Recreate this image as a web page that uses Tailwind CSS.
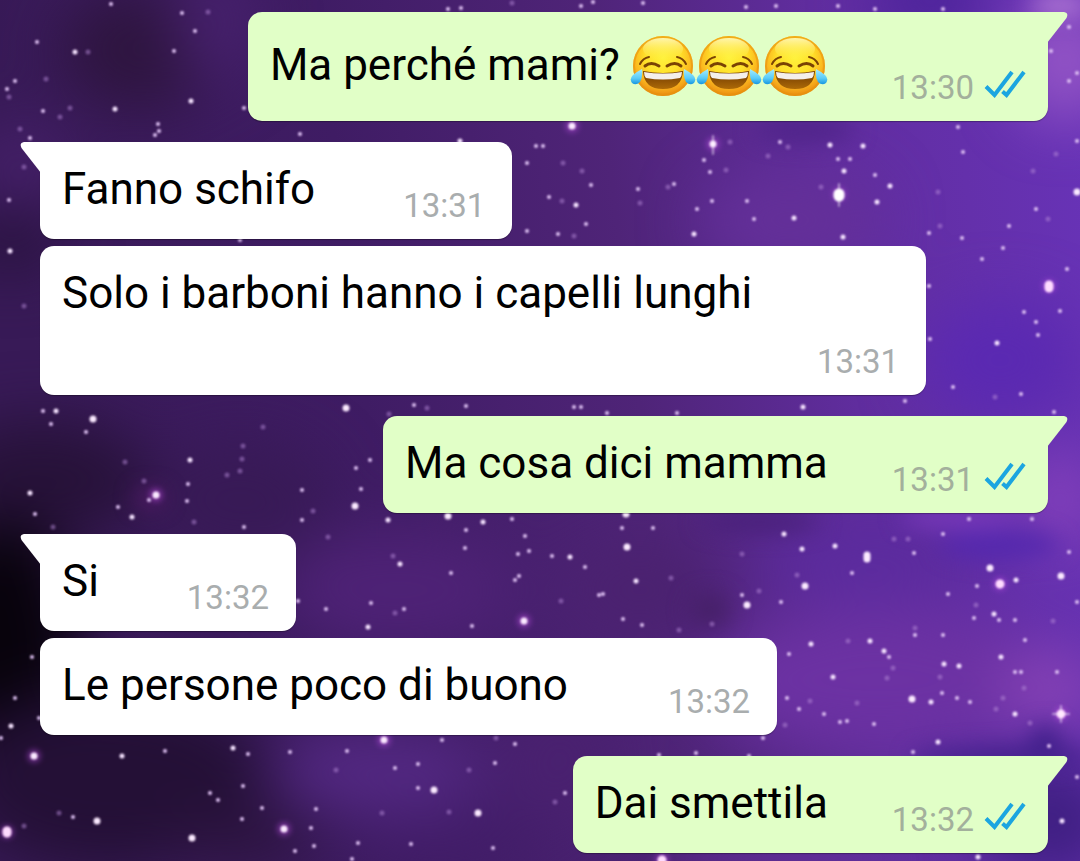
<!DOCTYPE html>
<html lang="it">
<head>
    <meta charset="UTF-8">
    <meta name="viewport" content="width=device-width, initial-scale=1.0">
    <title>Chat</title>

    <!-- Tailwind CSS -->
    <script src="https://cdn.jsdelivr.net/npm/@tailwindcss/browser@4"></script>
</head>
<body class="bg-[#3a1a5e] font-['Roboto',sans-serif] text-black">
    <main class="relative isolate min-h-screen overflow-hidden">

        <!-- Wallpaper: nebula and stars -->
        <svg class="absolute inset-0 -z-10 w-full h-full" viewBox="0 0 1080 861" preserveAspectRatio="xMidYMid slice" aria-hidden="true">
            <defs>
                <linearGradient id="sky" x1="0" y1="0.1" x2="1" y2="0">
                    <stop offset="0" stop-color="#381a57"/>
                    <stop offset="0.3" stop-color="#3f1c64"/>
                    <stop offset="0.55" stop-color="#4f2478"/>
                    <stop offset="0.75" stop-color="#602d9e"/>
                    <stop offset="1" stop-color="#6833b8"/>
                </linearGradient>
                <filter id="cloud" x="-60%" y="-60%" width="220%" height="220%" color-interpolation-filters="sRGB">
                    <feGaussianBlur stdDeviation="30"/>
                </filter>
                <filter id="wisp" x="-60%" y="-60%" width="220%" height="220%" color-interpolation-filters="sRGB">
                    <feGaussianBlur stdDeviation="11"/>
                </filter>
                <filter id="glow" x="-10%" y="-10%" width="120%" height="120%" color-interpolation-filters="sRGB">
                    <feGaussianBlur stdDeviation="3"/>
                </filter>
                <filter id="soft" x="-5%" y="-5%" width="110%" height="110%" color-interpolation-filters="sRGB">
                    <feGaussianBlur stdDeviation="0.8"/>
                </filter>
            </defs>
            <rect width="1080" height="861" fill="url(#sky)"/>

            <g filter="url(#cloud)">
                <ellipse cx="140" cy="50" rx="80" ry="60" fill="#2e153f"/>
                <ellipse cx="20" cy="165" rx="50" ry="40" fill="#452069"/>
                <ellipse cx="215" cy="20" rx="40" ry="60" fill="#47216e"/>
                <ellipse cx="10" cy="240" rx="50" ry="30" fill="#28123d"/>
                <ellipse cx="40" cy="480" rx="110" ry="60" fill="#271239"/>
                <ellipse cx="0" cy="640" rx="80" ry="120" fill="#08030c"/>
                <ellipse cx="110" cy="780" rx="160" ry="90" fill="#241036"/>
                <ellipse cx="240" cy="840" rx="80" ry="30" fill="#2c143f"/>
                <ellipse cx="240" cy="500" rx="90" ry="60" fill="#381a56"/>
                <ellipse cx="400" cy="590" rx="120" ry="60" fill="#4e2276"/>
                <ellipse cx="380" cy="770" rx="110" ry="40" fill="#542984"/>
                <ellipse cx="450" cy="835" rx="90" ry="30" fill="#421d69"/>
                <ellipse cx="640" cy="590" rx="80" ry="50" fill="#4b2270"/>
                <ellipse cx="560" cy="760" rx="50" ry="60" fill="#4a2170"/>
                <ellipse cx="790" cy="220" rx="90" ry="50" fill="#643099"/>
                <ellipse cx="870" cy="560" rx="110" ry="40" fill="#5b2b9e"/>
                <ellipse cx="880" cy="680" rx="170" ry="70" fill="#6c32a3"/>
                <ellipse cx="1000" cy="360" rx="80" ry="60" fill="#5a29b2"/>
                <ellipse cx="1060" cy="500" rx="40" ry="50" fill="#8441bb"/>
                <ellipse cx="1065" cy="60" rx="50" ry="60" fill="#9556c6"/>
                <ellipse cx="930" cy="0" rx="60" ry="30" fill="#462096"/>
                <ellipse cx="1050" cy="690" rx="50" ry="40" fill="#8843b6"/>
                <ellipse cx="1050" cy="820" rx="70" ry="60" fill="#3f1f82"/>
            </g>
            <g filter="url(#wisp)">
                <ellipse cx="805" cy="130" rx="50" ry="12" fill="#4f2489"/>
                <ellipse cx="710" cy="610" rx="20" ry="16" fill="#462068"/>
                <ellipse cx="760" cy="522" rx="60" ry="10" fill="#482079"/>
                <ellipse cx="1000" cy="545" rx="60" ry="14" fill="#5428ae"/>
                <ellipse cx="960" cy="518" rx="60" ry="10" fill="#7a3abb"/>
                <ellipse cx="1000" cy="758" rx="90" ry="10" fill="#42208c"/>
                <ellipse cx="1045" cy="740" rx="16" ry="14" fill="#42208c"/>
                <ellipse cx="1060" cy="5" rx="30" ry="10" fill="#b27ad6"/>
                <ellipse cx="150" cy="498" rx="14" ry="8" fill="#5c1c70"/>
                <ellipse cx="790" cy="858" rx="120" ry="5" fill="#6a34a8"/>
            </g>

            <!-- Halos of the brightest stars -->
            <path filter="url(#glow)" fill="none" stroke="#c04fe6" stroke-width="12" stroke-linecap="round" opacity="0.6" d="M7 832h0M34 756h0M284 829h0M156 495h0M384 740h0M524 621h0M1000 584h0M662 860h0M1061 714h0M839 194h0M1049 286h0M572 126h0M713 144h0"/>

            <g filter="url(#soft)" fill="none" stroke-linecap="round">
                <!-- Faint -->
                <path stroke="#b58ad8" stroke-width="5" opacity="0.5" d="M208 12h0M88 52h0M9 97h0M46 79h0M70 108h0M60 117h0M20 129h0M512 3h0M24 306h0M24 167h0M427 408h0M263 427h0M389 414h0M726 170h0M730 142h0M788 147h0M768 156h0M821 187h0M938 192h0M668 187h0M562 201h0M582 171h0M563 163h0M640 203h0M574 236h0M940 226h0M1048 219h0M1056 154h0M1033 171h0M995 397h0M243 446h0M227 475h0M53 527h0M194 522h0M313 511h0M328 537h0M393 556h0M395 613h0M496 738h0M336 770h0M469 770h0M382 813h0M449 812h0M59 813h0M24 826h0M908 539h0M894 539h0M797 575h0M742 554h0M759 591h0M671 578h0M561 601h0M712 624h0M679 630h0M1053 621h0M976 605h0M848 641h0M915 628h0M940 677h0M1024 688h0M887 678h0M893 668h0M785 725h0M810 701h0M857 703h0M996 709h0M1003 698h0M1030 723h0M555 802h0M125 462h0M144 481h0M242 459h0M240 471h0"/>
                <!-- Small -->
                <path stroke="#e2c4f6" stroke-width="4" d="M111 4h0M182 13h0M195 31h0M37 42h0M174 51h0M15 81h0M7 89h0M43 111h0M244 108h0M158 124h0M159 131h0M155 135h0M30 138h0M300 134h0M448 9h0M461 8h0M527 163h0M536 146h0M527 231h0M9 200h0M240 240h0M43 411h0M51 424h0M414 405h0M466 406h0M543 146h0M581 6h0M593 2h0M643 3h0M746 7h0M776 6h0M838 6h0M875 9h0M943 9h0M704 160h0M710 172h0M780 142h0M838 159h0M850 159h0M958 127h0M963 152h0M875 175h0M638 189h0M674 184h0M591 185h0M549 197h0M712 201h0M747 201h0M697 209h0M754 219h0M586 224h0M558 234h0M929 233h0M962 238h0M1009 226h0M1036 209h0M1003 248h0M982 259h0M1067 269h0M1024 312h0M1060 311h0M1036 322h0M1038 335h0M929 286h0M930 339h0M953 387h0M1021 394h0M905 401h0M1054 412h0M581 407h0M574 407h0M607 413h0M677 413h0M1069 27h0M1051 51h0M1069 81h0M1077 73h0M1077 141h0"/>
                <path stroke="#e2c4f6" stroke-width="4" d="M86 432h0M149 500h0M188 484h0M187 501h0M118 507h0M35 514h0M244 527h0M302 490h0M302 520h0M356 468h0M361 489h0M370 460h0M466 530h0M512 519h0M525 536h0M465 548h0M518 554h0M529 551h0M451 573h0M519 576h0M515 580h0M298 601h0M326 609h0M371 603h0M404 609h0M472 626h0M32 657h0M15 698h0M39 718h0M1 738h0M248 754h0M290 752h0M347 751h0M442 740h0M515 744h0M418 764h0M395 768h0M495 763h0M418 788h0M243 786h0M210 793h0M218 800h0M262 808h0M316 809h0M242 819h0M73 817h0M311 828h0M314 846h0M295 851h0M358 843h0M352 859h0M411 844h0M493 848h0M165 751h0M1032 519h0M969 519h0M914 553h0M943 534h0M852 573h0M742 595h0M781 602h0M622 528h0M653 528h0M552 556h0M585 567h0M599 595h0M603 594h0M623 619h0M642 625h0M1069 552h0M1077 602h0M977 586h0M948 594h0M974 618h0M999 620h0M1015 620h0M789 654h0M889 657h0M915 635h0M943 635h0M1025 640h0M942 693h0M1015 672h0M1021 672h0M1057 672h0M787 698h0M799 709h0M957 698h0M970 702h0M824 714h0M840 722h0M847 721h0M874 724h0M1049 746h0M913 752h0M763 738h0M749 756h0M696 753h0M659 755h0M565 793h0M1077 777h0"/>
                <!-- Bright -->
                <path stroke="#f6e4ff" stroke-width="5" d="M75 52h0M191 101h0M115 109h0M460 141h0M10 251h0M56 411h0M830 145h0M863 146h0M844 171h0M890 186h0M877 202h0M576 205h0M794 218h0M694 234h0M843 237h0M997 343h0M803 407h0M190 460h0M132 517h0M30 493h0M388 520h0M483 522h0M400 564h0M368 627h0M11 726h0M122 756h0M233 748h0M784 534h0M802 549h0M835 546h0M570 557h0M636 581h0M1016 580h0M994 614h0M811 644h0M870 641h0M884 651h0M1001 657h0M944 664h0M959 666h0M833 677h0M931 702h0M1015 714h0M938 742h0M1062 821h0M978 857h0"/>
                <path stroke="#fbeaff" stroke-width="7" d="M93 419h0M346 408h0M572 126h0M713 144h0M1077 192h0M156 495h0M355 506h0M448 516h0M524 621h0M34 756h0M384 740h0M434 790h0M478 813h0M97 821h0M284 829h0M192 838h0M805 586h0M747 605h0M627 547h0M626 514h0M990 568h0M1061 576h0M912 699h0M867 555v4"/>
                <path stroke="#ffdcff" stroke-width="9" d="M7 831v2M1049 285v3M1000 584h0M662 860h0M1061 714h0"/>
                <path stroke="#ffffff" stroke-width="11" d="M839 194v2"/>
                <path stroke="#ffffff" stroke-width="2" opacity="0.5" d="M839 184v22M713 136v18M1053 714h16M1061 706v16"/>
            </g>
        </svg>

        <!-- Shared drawings -->
        <svg class="absolute w-0 h-0" aria-hidden="true">
            <defs>
                <radialGradient id="face" cx="0.5" cy="0.36" r="0.66">
                    <stop offset="0" stop-color="#fff23c"/>
                    <stop offset="0.45" stop-color="#ffe02a"/>
                    <stop offset="0.72" stop-color="#fbb81f"/>
                    <stop offset="0.88" stop-color="#f09a16"/>
                    <stop offset="1" stop-color="#e07f08"/>
                </radialGradient>
                <linearGradient id="shine" x1="0" y1="0" x2="0" y2="1">
                    <stop offset="0" stop-color="#fffbd0" stop-opacity="0.8"/>
                    <stop offset="1" stop-color="#fff04a" stop-opacity="0"/>
                </linearGradient>
                <linearGradient id="mouth" x1="0" y1="0" x2="0" y2="1">
                    <stop offset="0" stop-color="#6b3500"/>
                    <stop offset="1" stop-color="#ad6a08"/>
                </linearGradient>
                <linearGradient id="tear" x1="0" y1="0" x2="0" y2="1">
                    <stop offset="0" stop-color="#a5ecff"/>
                    <stop offset="0.6" stop-color="#5accf8"/>
                    <stop offset="1" stop-color="#1796e0"/>
                </linearGradient>
                <symbol id="joy" viewBox="0 0 66 64">
                    <circle cx="33" cy="33" r="30" fill="url(#face)"/>
                    <circle cx="33" cy="33" r="29" fill="none" stroke="#e8930f" stroke-width="2" opacity="0.6"/>
                    <ellipse cx="33" cy="16" rx="20" ry="11" fill="url(#shine)"/>
                    <g fill="none" stroke="#7a4304" stroke-linecap="round">
                        <path stroke-width="2" d="M10 31Q13 25 19 24M56 31Q53 25 47 24"/>
                        <path stroke-width="3" d="M15 33Q21 28 29 33M37 33Q45 28 51 33"/>
                    </g>
                    <path fill="url(#mouth)" d="M13 38Q33 42 53 38Q52 56 33 56Q14 56 13 38Z"/>
                    <path fill="#f4efea" d="M14 39Q33 42 52 39Q52 43 50 45Q33 48 16 45Q14 43 14 39Z"/>
                    <path fill="url(#tear)" d="M12 36Q13 44 10 49Q6 53 2 50Q-1 46 3 42Q8 38 12 36Z"/>
                    <path fill="url(#tear)" d="M54 36Q53 44 56 49Q60 53 64 50Q67 46 63 42Q58 38 54 36Z"/>
                </symbol>
                <symbol id="read" viewBox="0 0 42 28">
                    <path fill="none" stroke="#1ba5e0" stroke-width="4" d="M2 16.500L10.500 25L28 2M18.500 21.500L22.500 25L40 2"/>
                </symbol>
                <symbol id="tail" viewBox="0 0 21 32">
                    <path fill="currentColor" d="M0 0H17Q22 1 19.500 6L0 31Z"/>
                </symbol>
            </defs>
        </svg>

        <!-- Messages -->
        <div class="flex flex-col gap-[21px] pt-3 pb-2 pl-10 pr-8 text-[44px] leading-[52px]">

            <!-- Sent -->
            <div class="relative flex items-end gap-16 self-end bg-[#e1ffc7] rounded-[14px] rounded-tr-none pt-[21px] pb-[13px] px-[22px] shadow-[0_1px_1px_rgba(0,0,0,0.3)]">
                <svg class="absolute top-0 -right-5 w-[21px] h-8 text-[#e1ffc7]" aria-hidden="true"><use href="#tail"/></svg>
                <p class="flex items-center gap-2.5 mb-[11px]">
                    <span>Ma perché mami?</span>
                    <span class="flex" role="img" aria-label="😂😂😂">
                        <svg class="w-[66px] h-16"><use href="#joy"/></svg>
                        <svg class="w-[66px] h-16"><use href="#joy"/></svg>
                        <svg class="w-[66px] h-16"><use href="#joy"/></svg>
                    </span>
                </p>
                <div class="flex items-end gap-2.5 text-[33px] leading-10 text-[#a3b09c]">
                    <time>13:30</time>
                    <svg class="w-[42px] h-7 mb-2.5" role="img" aria-label="Letto"><use href="#read"/></svg>
                </div>
            </div>

            <!-- Received -->
            <div class="flex flex-col items-start gap-[7px]">
                <div class="relative flex items-end gap-[88px] bg-white rounded-[14px] rounded-tl-none pt-[21px] pb-[13px] pl-[22px] pr-[27px] shadow-[0_1px_1px_rgba(0,0,0,0.3)]">
                    <svg class="absolute top-0 -left-5 w-[21px] h-8 -scale-x-100 text-white" aria-hidden="true"><use href="#tail"/></svg>
                    <p class="mb-[11px]">Fanno schifo</p>
                    <time class="text-[33px] leading-10 text-[#a9adae]">13:31</time>
                </div>
                <div class="flex flex-col gap-[23px] bg-white rounded-[14px] pt-[21px] pb-[13px] pl-[22px] pr-[27px] shadow-[0_1px_1px_rgba(0,0,0,0.3)]">
                    <p class="pr-[147px]">Solo i barboni hanno i capelli lunghi</p>
                    <time class="self-end text-[33px] leading-10 text-[#a9adae]">13:31</time>
                </div>
            </div>

            <!-- Sent -->
            <div class="relative flex items-end gap-16 self-end bg-[#e1ffc7] rounded-[14px] rounded-tr-none pt-[21px] pb-[13px] px-[22px] shadow-[0_1px_1px_rgba(0,0,0,0.3)]">
                <svg class="absolute top-0 -right-5 w-[21px] h-8 text-[#e1ffc7]" aria-hidden="true"><use href="#tail"/></svg>
                <p class="mb-[11px]">Ma cosa dici mamma</p>
                <div class="flex items-end gap-2.5 text-[33px] leading-10 text-[#a3b09c]">
                    <time>13:31</time>
                    <svg class="w-[42px] h-7 mb-2.5" role="img" aria-label="Letto"><use href="#read"/></svg>
                </div>
            </div>

            <!-- Received -->
            <div class="flex flex-col items-start gap-[7px]">
                <div class="relative flex items-end gap-[88px] bg-white rounded-[14px] rounded-tl-none pt-[21px] pb-[13px] pl-[22px] pr-[27px] shadow-[0_1px_1px_rgba(0,0,0,0.3)]">
                    <svg class="absolute top-0 -left-5 w-[21px] h-8 -scale-x-100 text-white" aria-hidden="true"><use href="#tail"/></svg>
                    <p class="mb-[11px]">Si</p>
                    <time class="text-[33px] leading-10 text-[#a9adae]">13:32</time>
                </div>
                <div class="flex items-end gap-[88px] bg-white rounded-[14px] pt-[21px] pb-[13px] pl-[22px] pr-[27px] shadow-[0_1px_1px_rgba(0,0,0,0.3)]">
                    <p class="mb-[11px] pr-3">Le persone poco di buono</p>
                    <time class="text-[33px] leading-10 text-[#a9adae]">13:32</time>
                </div>
            </div>

            <!-- Sent -->
            <div class="relative flex items-end gap-16 self-end bg-[#e1ffc7] rounded-[14px] rounded-tr-none pt-[21px] pb-[13px] px-[22px] shadow-[0_1px_1px_rgba(0,0,0,0.3)]">
                <svg class="absolute top-0 -right-5 w-[21px] h-8 text-[#e1ffc7]" aria-hidden="true"><use href="#tail"/></svg>
                <p class="mb-[11px]">Dai smettila</p>
                <div class="flex items-end gap-2.5 text-[33px] leading-10 text-[#a3b09c]">
                    <time>13:32</time>
                    <svg class="w-[42px] h-7 mb-2.5" role="img" aria-label="Letto"><use href="#read"/></svg>
                </div>
            </div>
        </div>
    </main>
</body>
</html>
